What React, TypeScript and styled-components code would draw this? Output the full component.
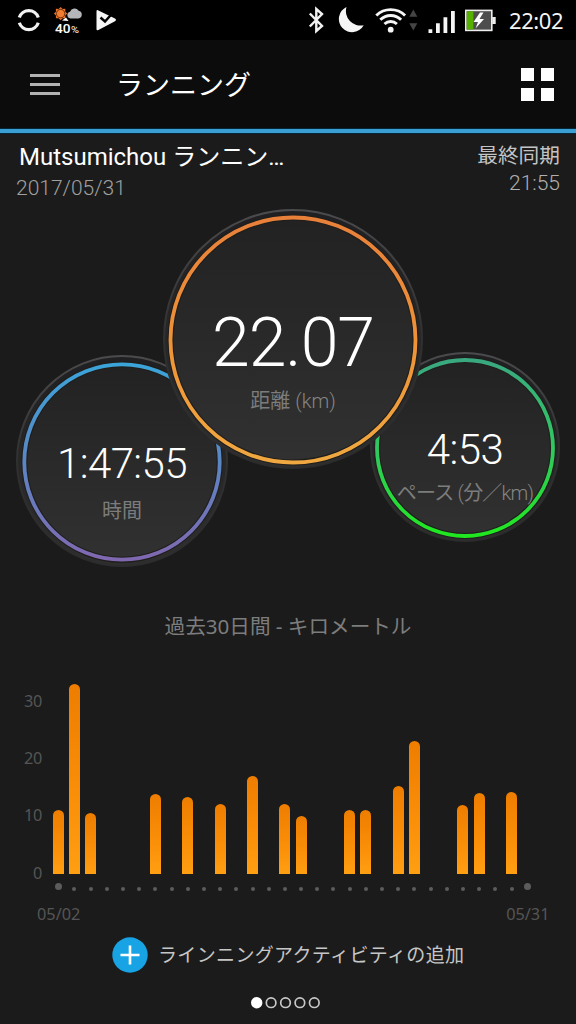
import React from "react";
import styled, { createGlobalStyle } from "styled-components";

const GlobalStyle = createGlobalStyle`
  body { margin: 0; background: #1b1b1b; }
  * { box-sizing: border-box; }
`;

const roboto = `Roboto, "Noto Sans CJK JP", sans-serif`;
const noto = `"Noto Sans", "Noto Sans CJK JP", sans-serif`;

const Screen = styled.div`
  width: 576px;
  height: 1024px;
  overflow: hidden;
  display: flex;
  flex-direction: column;
  background: #1b1b1b;
  color: #fff;
  font-family: ${roboto};
  white-space: nowrap;
`;

const StatusBar = styled.div`
  height: 40px;
  flex: none;
  display: flex;
  justify-content: space-between;
  background: #000;
  padding: 0 12px 0 16px;
`;

const StatusGroup = styled.div`
  display: flex;
`;

const StatusIcon = styled.svg<{ $gap?: number }>`
  display: block;
  height: 40px;
  margin-left: ${(p) => p.$gap ?? 0}px;
`;

const Clock = styled.div`
  font-family: ${noto};
  font-size: 22px;
  line-height: 40px;
  width: 55px;
  margin-left: 13px;
  letter-spacing: -0.4px;
  color: #f4f4f4;
`;

const AppBar = styled.header`
  height: 93px;
  flex: none;
  display: flex;
  align-items: center;
  padding: 0 22px 0 30px;
  background: #0c0c0c;
  border-bottom: 4px solid #3a9fd3;
  box-shadow: inset 0 -1px 0 #04263b, 0 1px 0 #04263b;
`;

const MenuButton = styled.div`
  display: flex;
  flex-direction: column;
  gap: 5.7px;
  width: 30px;
`;

const MenuLine = styled.span`
  height: 3px;
  background: #b2b2b2;
`;

const AppTitle = styled.h1`
  margin: 0 0 0 56px;
  flex: 1;
  font-size: 27px;
  font-weight: 400;
  line-height: 40px;
  padding-top: 3px;
`;

const GridButton = styled.div`
  display: grid;
  grid-template-columns: 13px 13px;
  gap: 7px;
`;

const GridCell = styled.span`
  height: 13px;
  background: #fff;
`;

const Summary = styled.section`
  height: 76px;
  flex: none;
  display: flex;
  justify-content: space-between;
  padding: 7px 16px 0;
`;

const SummaryColumn = styled.div<{ $end?: boolean }>`
  display: flex;
  flex-direction: column;
  text-align: ${(p) => (p.$end ? "right" : "left")};
`;

const ActivityName = styled.div`
  font-size: 24px;
  line-height: 34px;
  padding-left: 3px;
`;

const SummaryText = styled.div<{ $size: number; $color: string; $line: number; $light?: boolean }>`
  font-size: ${(p) => p.$size}px;
  font-weight: ${(p) => (p.$light ? 300 : 400)};
  line-height: ${(p) => p.$line}px;
  color: ${(p) => p.$color};
`;

const Gauges = styled.section`
  height: 391px;
  flex: none;
  display: flex;
  align-items: flex-start;
  padding-left: 16px;
`;

const GaugeBox = styled.div<{ $size: number; $top: number; $left: number; $front?: boolean }>`
  position: relative;
  z-index: ${(p) => (p.$front ? 1 : 0)};
  flex: none;
  width: ${(p) => p.$size}px;
  height: ${(p) => p.$size}px;
  margin-top: ${(p) => p.$top}px;
  margin-left: ${(p) => p.$left}px;
  display: grid;
  grid-template-columns: 100%;
  justify-items: center;
`;

const GaugeDial = styled.svg`
  display: block;
  grid-area: 1 / 1;
`;

const GaugeText = styled.div<{ $pad: number }>`
  grid-area: 1 / 1;
  z-index: 1;
  display: flex;
  flex-direction: column;
  align-items: center;
  padding-top: ${(p) => p.$pad}px;
`;

const GaugeValue = styled.div<{ $size: number; $spacing: number }>`
  font-size: ${(p) => p.$size}px;
  line-height: ${(p) => p.$size}px;
  font-weight: 300;
  letter-spacing: ${(p) => p.$spacing}px;
`;

const GaugeLabel = styled.div<{ $gap: number; $spacing: number }>`
  margin-top: ${(p) => p.$gap}px;
  font-size: 20px;
  line-height: 28px;
  font-weight: 400;
  letter-spacing: ${(p) => p.$spacing}px;
  color: #7c7c7c;
`;

const Light = styled.span`
  font-weight: 300;
  color: #858585;
`;

const ChartTitle = styled.h2`
  margin: 0;
  height: 52px;
  flex: none;
  text-align: center;
  font-family: ${noto};
  font-size: 20.6px;
  font-weight: 400;
  line-height: 53px;
  color: #7d7d7d;
`;

const Chart = styled.section`
  height: 222px;
  flex: none;
  display: grid;
  grid-template-columns: 50.2px 486px;
  grid-template-rows: 222px;
`;

const Axis = styled.div`
  display: flex;
  flex-direction: column;
  justify-content: flex-end;
  padding-right: 8px;
  text-align: right;
`;

const Tick = styled.div`
  font-family: ${noto};
  font-size: 16.3px;
  line-height: 57.2px;
  height: 57.2px;
  letter-spacing: -0.2px;
  color: #555;
  &:last-child { margin-bottom: -27.8px; }
`;

const Bars = styled.div`
  display: grid;
  grid-template-columns: repeat(30, 16.2px);
  align-items: end;
  justify-items: center;
`;

const Bar = styled.div`
  width: 11px;
  border-radius: 5.5px 5.5px 0 0;
  background: linear-gradient(#ee7d00, #fa8f08 60%, #ff9f12);
`;

const Days = styled.div`
  height: 27px;
  flex: none;
  display: grid;
  grid-template-columns: repeat(30, 16.2px);
  align-items: center;
  justify-items: center;
  padding-left: 50.2px;
`;

const Day = styled.span<{ $end: boolean }>`
  width: ${(p) => (p.$end ? 7 : 4)}px;
  height: ${(p) => (p.$end ? 7 : 4)}px;
  margin-top: ${(p) => (p.$end ? -2 : 2)}px;
  border-radius: 50%;
  background: #5c5c5c;
`;

const DateRow = styled.div`
  height: 26px;
  flex: none;
  display: flex;
  justify-content: space-between;
  padding: 0 26.5px 0 37px;
  font-family: ${noto};
  font-size: 16.3px;
  line-height: 26px;
  color: #555;
`;

const AddButton = styled.div`
  height: 58px;
  flex: none;
  display: flex;
  align-items: center;
  padding: 0 0 2px 112px;
  color: #c6c6c6;
`;

const AddLabel = styled.span`
  margin-left: 10px;
  font-size: 19px;
  line-height: 36px;
  letter-spacing: 0.35px;
  padding-top: 1px;
`;

const Pager = styled.svg`
  display: block;
  flex: none;
  margin: 0 auto;
`;

interface GaugeProps {
  id: string;
  size: number;
  ring: number;
  top: number;
  left: number;
  colors: [string, string, string];
  value: string;
  valueSize: number;
  spacing: number;
  labelSpacing?: number;
  label: React.ReactNode;
  pad: number;
  gap: number;
  front?: boolean;
}

function Gauge(p: GaugeProps) {
  const c = p.size / 2;
  return (
    <GaugeBox $size={p.size} $top={p.top} $left={p.left} $front={p.front}>
      <GaugeDial width={p.size} height={p.size}>
        <defs>
          <linearGradient id={p.id + "-ring"} x1="0" y1="0" x2="0" y2="1">
            <stop offset="0" stopColor={p.colors[0]} />
            <stop offset="0.5" stopColor={p.colors[1]} />
            <stop offset="1" stopColor={p.colors[2]} />
          </linearGradient>
          <linearGradient id={p.id + "-face"} x1="0" y1="0" x2="0" y2="1">
            <stop offset="0" stopColor="#222222" />
            <stop offset="1" stopColor="#303130" />
          </linearGradient>
          <linearGradient id={p.id + "-edge"} x1="0" y1="0" x2="0" y2="1">
            <stop offset="0" stopColor="#4b4b4d" />
            <stop offset="0.5" stopColor="#303031" />
            <stop offset="1" stopColor="#2c2c2d" />
          </linearGradient>
          <linearGradient id={p.id + "-rim"} x1="0" y1="0" x2="0" y2="1">
            <stop offset="0" stopColor="#202022" />
            <stop offset="1" stopColor="#2e2e2e" />
          </linearGradient>
        </defs>
        <circle cx={c} cy={c} r={c - 1} fill={`url(#${p.id}-rim)`} stroke={`url(#${p.id}-edge)`} strokeWidth="2" />
        <circle cx={c} cy={c + 1} r={p.ring} fill={`url(#${p.id}-face)`} stroke="#1f1e1c" strokeWidth="6" />
        <circle cx={c} cy={c + 1} r={p.ring} fill="none" stroke={`url(#${p.id}-ring)`} strokeWidth="3.8" />
      </GaugeDial>
      <GaugeText $pad={p.pad}>
        <GaugeValue $size={p.valueSize} $spacing={p.spacing}>{p.value}</GaugeValue>
        <GaugeLabel $gap={p.gap} $spacing={p.labelSpacing ?? 0}>{p.label}</GaugeLabel>
      </GaugeText>
    </GaugeBox>
  );
}

const distances = [
  64, 190, 61, 0, 0, 0, 80, 0, 77, 0, 70, 0, 98, 0, 70, 58, 0, 0, 64, 64, 0, 88, 133, 0, 0, 69, 81, 0, 82, 0,
];

const rays = [0, 45, 90, 135, 180, 225, 270, 315];

export default function App() {
  return (
    <>
      <GlobalStyle />
      <Screen>
        <StatusBar>
          <StatusGroup>
            <StatusIcon width="26" viewBox="0 0 26 40">
              <path d="M3.3 17.6A10 10 0 0 1 22.3 17.6M3.3 22.8A10 10 0 0 0 22.3 22.8" fill="none" stroke="#f2f2f2" strokeWidth="3.2" />
            </StatusIcon>
            <StatusIcon width="30" viewBox="0 0 30 40" $gap={11}>
              {rays.map((r) => (
                <path key={r} d="M5.2 9.5L7.6 6.9L10 9.5Z" fill="#e8722a" transform={`rotate(${r} 7.6 13.6)`} />
              ))}
              <circle cx="7.6" cy="13.6" r="4.2" fill="#f07c30" stroke="#7c3510" strokeWidth="0.9" />
              <path d="M17.5 18.4a3.4 3.4 0 0 1-.5-6.7 4.8 4.8 0 0 1 8.6-1 3.9 3.9 0 0 1-.2 7.7z" fill="#b4b6ba" />
              <path d="M9 20.5l4-3 2.5 3.5z" fill="#fff" />
              <text x="2" y="33.3" fontFamily="Roboto, sans-serif" fontSize="13.5" fontWeight="500" fill="#fff" textLength="15.5" lengthAdjust="spacingAndGlyphs">40</text>
              <text x="18" y="32.7" fontFamily="Roboto, sans-serif" fontSize="9.5" fill="#fff" textLength="8" lengthAdjust="spacingAndGlyphs">%</text>
            </StatusIcon>
            <StatusIcon width="22" viewBox="0 0 22 40" $gap={12}>
              <path d="M1.5 11.5Q1.5 9.5 3.4 10.4L20 18.6Q22 20 20 21.3L3.4 30Q1.5 31 1.5 29Z" fill="#f5f5f5" />
              <path d="M5.5 17.5L10 21.5L18.5 12" fill="none" stroke="#000" strokeWidth="2.4" />
            </StatusIcon>
          </StatusGroup>
          <StatusGroup>
            <StatusIcon width="17" viewBox="0 0 17 40">
              <path d="M1.8 13.5L14 26L8.3 31V9L14 14L1.8 26.5" fill="none" stroke="#f2f2f2" strokeWidth="2.4" />
            </StatusIcon>
            <StatusIcon width="28" viewBox="0 0 28 40" $gap={12}>
              <path d="M9.5 7A14.5 14.5 0 0 0 26.7 25.2A13.2 13.2 0 1 1 9.5 7Z" fill="#f5f5f5" />
            </StatusIcon>
            <StatusIcon width="32" viewBox="0 0 32 40" $gap={10}>
              <g fill="none" stroke="#f5f5f5" strokeWidth="2.9">
                <path d="M1.3 15.5A20.5 20.5 0 0 1 30.1 15.5" />
                <path d="M5.3 19.8A14.8 14.8 0 0 1 26.1 19.8" />
                <path d="M9.5 24A9 9 0 0 1 21.9 24" />
              </g>
              <circle cx="15.7" cy="29.7" r="2.9" fill="#f5f5f5" />
            </StatusIcon>
            <StatusIcon width="9" viewBox="0 0 9 40" $gap={2}>
              <path d="M0.3 16.7L4.3 9.5L8.3 16.7ZM0.3 23.3L4.3 30.5L8.3 23.3Z" fill="#454545" />
            </StatusIcon>
            <StatusIcon width="28" viewBox="0 0 28 40" $gap={10}>
              <path d="M0.5 29.3h3.8v3.7h-3.8zM8 23.3h3.8v9.7h-3.8zM15.5 17.3h3.8v15.7h-3.8zM23 11h3.8v22h-3.8z" fill="#f5f5f5" />
            </StatusIcon>
            <StatusIcon width="31" viewBox="0 0 31 40" $gap={9}>
              <rect x="0.8" y="10.4" width="26" height="20" fill="#4d4d4d" stroke="#ededed" strokeWidth="1.6" />
              <rect x="27.2" y="17" width="3.5" height="7" fill="#ededed" />
              <rect x="1.7" y="11.3" width="6.7" height="18.2" fill="#56b000" />
              <path d="M15 12.5L8.5 22H13L10.5 28.5L19 19H14.5L18.5 12.5Z" fill="#fff" />
            </StatusIcon>
            <Clock>22:02</Clock>
          </StatusGroup>
        </StatusBar>

        <AppBar>
          <MenuButton>
            <MenuLine />
            <MenuLine />
            <MenuLine />
          </MenuButton>
          <AppTitle>ランニング</AppTitle>
          <GridButton>
            <GridCell />
            <GridCell />
            <GridCell />
            <GridCell />
          </GridButton>
        </AppBar>

        <Summary>
          <SummaryColumn>
            <ActivityName>Mutsumichou ランニン…</ActivityName>
            <SummaryText $size={21} $color="#a0a0a0" $line={28} $light>2017/05/31</SummaryText>
          </SummaryColumn>
          <SummaryColumn $end>
            <SummaryText $size={20.7} $color="#c4c4c4" $line={32}>最終同期</SummaryText>
            <SummaryText $size={21} $color="#b0b0b0" $line={22} $light>21:55</SummaryText>
          </SummaryColumn>
        </Summary>

        <Gauges>
          <Gauge id="time" size={212} ring={97.7} top={146} left={0} colors={["#3ba4d8", "#5b86c4", "#8068b0"]}
            value="1:47:55" valueSize={42} spacing={-0.6} label="時間" pad={88} gap={12} />
          <Gauge id="distance" size={260} ring={122.5} top={0} left={-65} colors={["#e8803a", "#ee9238", "#f0a840"]}
            value="22.07" valueSize={68} spacing={-1} label={<>距離 <Light>(km)</Light></>} pad={100} gap={10} front />
          <Gauge id="pace" size={190} ring={88} top={143} left={-53} colors={["#3aa880", "#30c860", "#20e820"]}
            value="4:53" valueSize={42} spacing={-0.6} labelSpacing={-0.8}
            label={<>ペース <Light>(</Light>分／<Light>km)</Light></>} pad={77} gap={8} />
        </Gauges>

        <ChartTitle>過去30日間 - キロメートル</ChartTitle>

        <Chart>
          <Axis>
            <Tick>30</Tick>
            <Tick>20</Tick>
            <Tick>10</Tick>
            <Tick>0</Tick>
          </Axis>
          <Bars>
            {distances.map((h, i) => (
              <Bar key={i} style={{ height: h }} />
            ))}
          </Bars>
        </Chart>
        <Days>
          {distances.map((_, i) => (
            <Day key={i} $end={i === 0 || i === 29} />
          ))}
        </Days>
        <DateRow>
          <span>05/02</span>
          <span>05/31</span>
        </DateRow>

        <AddButton>
          <svg width="36" height="36" viewBox="0 0 36 36">
            <circle cx="18" cy="18" r="17.7" fill="#18a4e4" />
            <path d="M18 8.5V27.5M8.5 18H27.5" stroke="#fff" strokeWidth="2.6" />
          </svg>
          <AddLabel>ラインニングアクティビティの追加</AddLabel>
        </AddButton>

        <Pager width="76" height="34">
          <circle cx="6.7" cy="17.7" r="5.7" fill="#fff" />
          {[21.1, 35.5, 49.9, 64.3].map((x) => (
            <circle key={x} cx={x} cy="17.7" r="4.8" fill="none" stroke="#c8c8c8" strokeWidth="1.7" />
          ))}
        </Pager>
      </Screen>
    </>
  );
}
